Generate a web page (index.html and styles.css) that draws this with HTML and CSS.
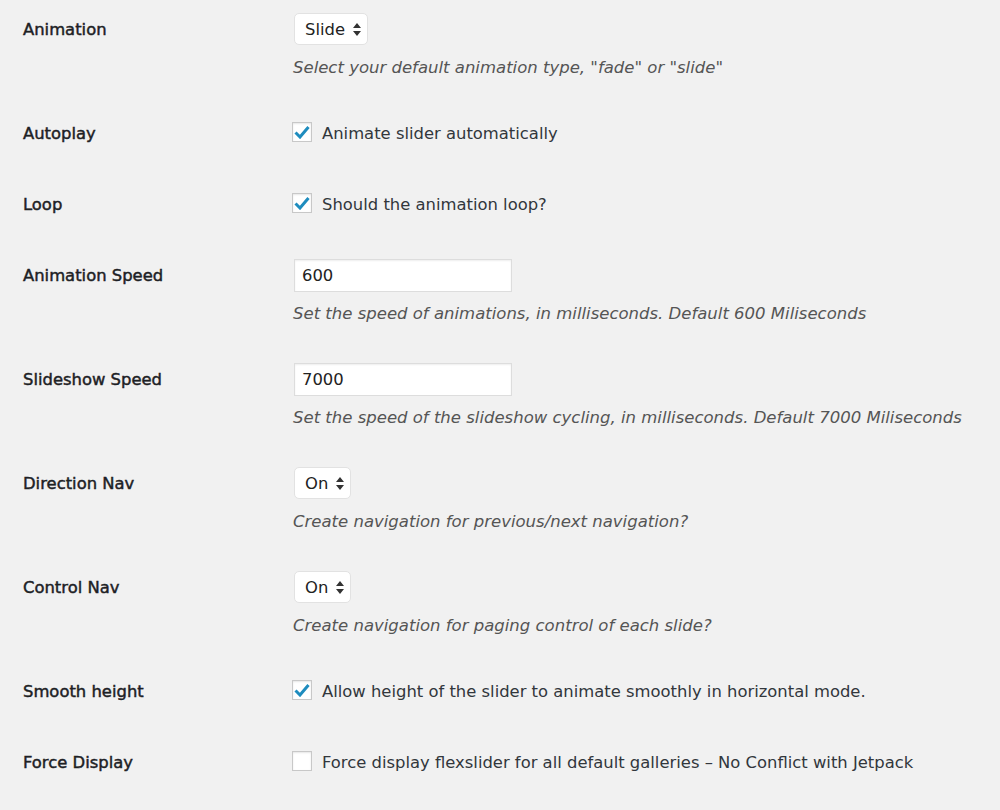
FILE: index.html
```html
<!DOCTYPE html>
<html lang="en">
<head>
<meta charset="utf-8">
<title>Slider Settings</title>
<link rel="stylesheet" href="styles.css">
</head>
<body>
<div class="form">
  <div class="row">
    <div class="label">Animation</div>
    <div class="field">
      <div class="line">
        <div class="select">
          <span>Slide</span>
          <svg class="arrows" width="8" height="13" viewBox="0 0 8 13"><path d="M4 0 L8 5 L0 5 Z M4 13 L8 8 L0 8 Z" fill="#333"/></svg>
        </div>
      </div>
      <p class="desc">Select your default animation type, "fade" or "slide"</p>
    </div>
  </div>

  <div class="row">
    <div class="label">Autoplay</div>
    <div class="field">
      <div class="line">
        <span class="check checked"><svg width="16" height="14" viewBox="0 0 16 14"><path d="M1.5 7.5 L6 12 L14.5 2" fill="none" stroke="#1e8cbe" stroke-width="3"/></svg></span>
        <span class="ctext">Animate slider automatically</span>
      </div>
    </div>
  </div>

  <div class="row">
    <div class="label">Loop</div>
    <div class="field">
      <div class="line">
        <span class="check checked"><svg width="16" height="14" viewBox="0 0 16 14"><path d="M1.5 7.5 L6 12 L14.5 2" fill="none" stroke="#1e8cbe" stroke-width="3"/></svg></span>
        <span class="ctext">Should the animation loop?</span>
      </div>
    </div>
  </div>

  <div class="row">
    <div class="label">Animation Speed</div>
    <div class="field">
      <div class="line">
        <div class="input">600</div>
      </div>
      <p class="desc">Set the speed of animations, in milliseconds. Default 600 Miliseconds</p>
    </div>
  </div>

  <div class="row">
    <div class="label">Slideshow Speed</div>
    <div class="field">
      <div class="line">
        <div class="input">7000</div>
      </div>
      <p class="desc">Set the speed of the slideshow cycling, in milliseconds. Default 7000 Miliseconds</p>
    </div>
  </div>

  <div class="row">
    <div class="label">Direction Nav</div>
    <div class="field">
      <div class="line">
        <div class="select">
          <span>On</span>
          <svg class="arrows" width="8" height="13" viewBox="0 0 8 13"><path d="M4 0 L8 5 L0 5 Z M4 13 L8 8 L0 8 Z" fill="#333"/></svg>
        </div>
      </div>
      <p class="desc">Create navigation for previous/next navigation?</p>
    </div>
  </div>

  <div class="row">
    <div class="label">Control Nav</div>
    <div class="field">
      <div class="line">
        <div class="select">
          <span>On</span>
          <svg class="arrows" width="8" height="13" viewBox="0 0 8 13"><path d="M4 0 L8 5 L0 5 Z M4 13 L8 8 L0 8 Z" fill="#333"/></svg>
        </div>
      </div>
      <p class="desc">Create navigation for paging control of each slide?</p>
    </div>
  </div>

  <div class="row">
    <div class="label">Smooth height</div>
    <div class="field">
      <div class="line">
        <span class="check checked"><svg width="16" height="14" viewBox="0 0 16 14"><path d="M1.5 7.5 L6 12 L14.5 2" fill="none" stroke="#1e8cbe" stroke-width="3"/></svg></span>
        <span class="ctext">Allow height of the slider to animate smoothly in horizontal mode.</span>
      </div>
    </div>
  </div>

  <div class="row">
    <div class="label">Force Display</div>
    <div class="field">
      <div class="line">
        <span class="check"></span>
        <span class="ctext">Force display flexslider for all default galleries – No Conflict with Jetpack</span>
      </div>
    </div>
  </div>
</div>
</body>
</html>
```

FILE: styles.css
```css
html, body {
  margin: 0;
  padding: 0;
  background: #f1f1f1;
}

body {
  font-family: "DejaVu Sans", Verdana, sans-serif;
  font-size: 16.4px;
  color: #32373c;
}

.form {
  padding-left: 23px;
}

.row {
  display: flex;
  align-items: flex-start;
  padding: 13px 0 26px;
}

.label {
  width: 270px;
  flex: none;
  line-height: 30px;
  padding-top: 2px;
  font-weight: normal;
  color: #1d2125;
  -webkit-text-stroke: 0.45px #1d2125;
}

.field {
  flex: 1;
}

.line {
  display: flex;
  align-items: center;
  height: 32px;
}

.select {
  position: relative;
  display: flex;
  align-items: center;
  height: 32px;
  box-sizing: border-box;
  padding: 0 22px 0 10px;
  background: #fff;
  border: 1px solid #e2e2e2;
  border-radius: 5px;
  color: #222;
  margin-left: 1px;
}

.arrows {
  position: absolute;
  right: 6px;
  top: 9px;
}

.input {
  width: 218px;
  height: 33px;
  box-sizing: border-box;
  margin-left: 1px;
  padding: 0 7px;
  line-height: 31px;
  background: #fff;
  border: 1px solid #ddd;
  box-shadow: inset 0 1px 2px rgba(0, 0, 0, 0.07);
  color: #222;
}

.check {
  width: 20px;
  height: 20px;
  box-sizing: border-box;
  flex: none;
  display: flex;
  align-items: center;
  justify-content: center;
  background: #fff;
  border: 1px solid #c8c8c8;
  box-shadow: inset 0 1px 2px rgba(0, 0, 0, 0.1);
  margin-left: -1px;
  margin-top: -2px;
}

.ctext {
  margin-left: 10px;
}

.desc {
  margin: 13px 0 0;
  line-height: 20px;
  font-size: 16.5px;
  font-style: italic;
  color: #555;
}
```
